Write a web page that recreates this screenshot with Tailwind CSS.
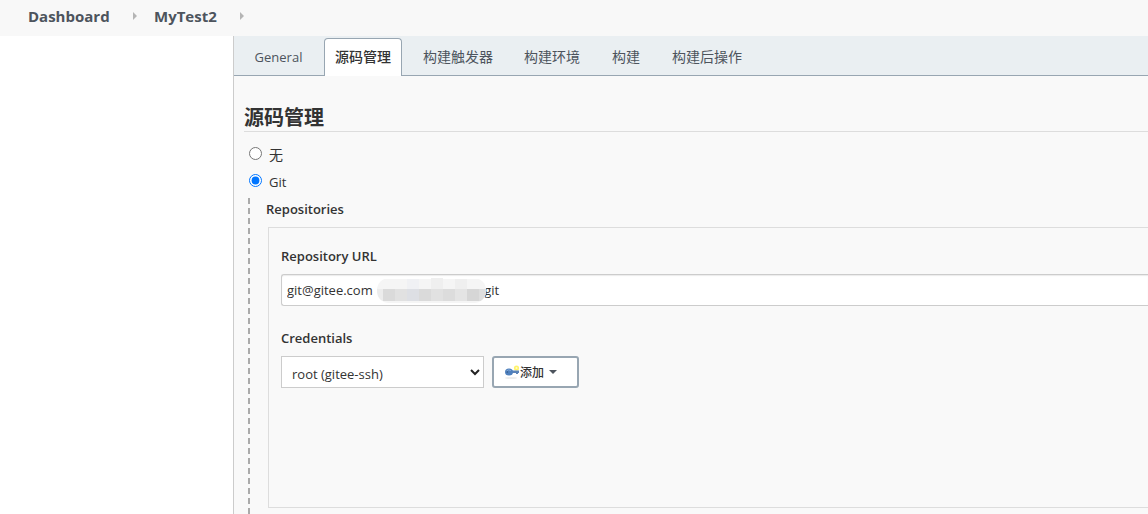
<!DOCTYPE html>
<html lang="zh-CN">
<head>
<meta charset="utf-8">
<meta name="viewport" content="width=device-width, initial-scale=1">
<title>MyTest2 Config</title>
<script src="https://cdn.jsdelivr.net/npm/@tailwindcss/browser@4"></script>
</head>
<body class="flex h-screen flex-col overflow-hidden bg-white font-['Open_Sans','Noto_Sans_CJK_SC',sans-serif] text-[13px] leading-5 text-[#333]">
<header class="h-9 shrink-0 bg-[#f8f8f8]">
  <nav class="flex h-8 items-center pl-7 text-[15px] font-bold text-[#4d545d]" aria-label="Breadcrumb">
    <a href="#" class="w-[82px] whitespace-nowrap">Dashboard</a>
    <svg class="ml-[23px] h-2 w-1" viewBox="0 0 4 8" fill="#b5b5b5"><path d="M0 0L4 4L0 8Z"/></svg>
    <a href="#" class="ml-[17px] w-[62px] whitespace-nowrap">MyTest2</a>
    <svg class="ml-6 h-2 w-1" viewBox="0 0 4 8" fill="#b5b5b5"><path d="M0 0L4 4L0 8Z"/></svg>
  </nav>
</header>
<div class="flex min-h-0 grow">
  <aside class="w-[233px] shrink-0"></aside>
  <main class="flex min-w-0 grow flex-col border-l border-[#ccc] bg-[#f9f9f9]">
    <nav class="flex h-10 shrink-0 items-end gap-3 border-b border-[#98a6b2] bg-[#eaeff2] pl-[11px] text-sm text-[#4d545d]">
      <a href="#" class="flex h-9 w-[67px] items-center justify-center text-[13px]">General</a>
      <a href="#" class="-mb-px flex h-[38px] w-[78px] items-center justify-center rounded-t border border-b-0 border-[#98a6b2] bg-white pb-0.5 font-medium text-[#333]" aria-current="page">源码管理</a>
      <a href="#" class="flex h-9 items-center px-[9px]">构建触发器</a>
      <a href="#" class="flex h-9 items-center px-[10px]">构建环境</a>
      <a href="#" class="flex h-9 items-center px-[10px]">构建</a>
      <a href="#" class="flex h-9 items-center px-[10px]">构建后操作</a>
    </nav>
    <form class="flex grow flex-col pl-[10px]">
      <h2 class="mt-7 h-7 border-b border-[#ddd] text-xl leading-7 font-bold">源码管理</h2>
      <div class="mt-[13px] flex flex-col gap-[7px] pl-[5px]">
        <label class="flex h-5 items-center gap-[7px] text-sm"><input type="radio" name="scm" class="mb-[3px] size-[13px]">无</label>
        <label class="flex h-5 items-center gap-[7px]"><input type="radio" name="scm" checked class="mb-[3px] size-[13px]">Git</label>
      </div>
      <div class="ml-1 mt-[6px] grow border-l-2 border-dashed border-[#aaa] pl-4">
        <h3 class="leading-[22px] font-semibold">Repositories</h3>
        <section class="ml-0.5 mt-[7px] h-[281px] border border-r-0 border-[#ddd] pl-3 pt-[18px]">
          <label for="url" class="block font-semibold">Repository URL</label>
          <div class="relative mt-2">
            <input id="url" type="text" class="h-8 w-full rounded-l-[3px] border border-r-0 border-[#ccc] bg-white px-[5px] shadow-[inset_0_1px_1px_rgba(0,0,0,0.08)]" value="git@gitee.com&nbsp;&nbsp;&nbsp;&nbsp;&nbsp;&nbsp;&nbsp;&nbsp;&nbsp;&nbsp;&nbsp;&nbsp;&nbsp;&nbsp;&nbsp;&nbsp;&nbsp;&nbsp;&nbsp;&nbsp;&nbsp;&nbsp;&nbsp;&nbsp;&nbsp;&nbsp;&nbsp;&nbsp;&nbsp;&nbsp;&nbsp;&nbsp;&nbsp;git">
            <svg class="absolute left-24 top-1 h-[25px] w-[110px]" viewBox="0 0 110 25">
              <clipPath id="pill"><rect x="0" y="0" width="109" height="25" rx="12"/></clipPath>
              <g clip-path="url(#pill)" shape-rendering="crispEdges">
                <path fill="#f5f5f5" d="M0 1H110V25H0Z"/>
                <path fill="#f0f1f4" d="M30 1h12v10H30z"/><path fill="#efefef" d="M54 0h12v11H54zM78 1h12v10H78z"/>
                <path fill="#ececec" d="M0 11h6v12H0z"/><path fill="#dadada" d="M6 11h12v12H6zM42 11h12v12H42z"/>
                <path fill="#e1e1e1" d="M18 11h12v12H18zM54 11h12v12H54z"/><path fill="#dddfe4" d="M30 11h12v12H30z"/>
                <path fill="#dcdcdc" d="M66 11h12v12H66z"/><path fill="#e4e4e4" d="M78 11h12v12H78z"/><path fill="#d6d6d6" d="M90 11h12v12H90z"/><path fill="#dedede" d="M102 11h8v12h-8z"/>
              </g>
            </svg>
          </div>
          <label for="cred" class="mt-[22px] block font-semibold">Credentials</label>
          <div class="mt-2 flex gap-2">
            <div class="relative">
              <select id="cred" class="h-8 w-[203px] appearance-none border border-[#ccc] bg-white pl-[10px] pt-[3px]"><option>root (gitee-ssh)</option></select>
              <svg class="pointer-events-none absolute right-1 top-3 h-2 w-[10px]" viewBox="0 0 10 8" fill="none" stroke="#222" stroke-width="2"><path d="M1 2L5 6L9 2"/></svg>
            </div>
            <button type="button" class="flex h-8 w-[87px] items-center rounded-[3px] border-2 border-[#98a6b2] bg-white pl-[11px] text-xs font-medium">
              <svg class="h-4 w-[15px]" viewBox="0 0 15 16">
                <ellipse cx="6" cy="14" rx="6" ry="1" fill="#ececec"/>
                <circle cx="11.5" cy="4" r="2.6" fill="#fff36b"/><circle cx="11.5" cy="4" r="1" fill="#fffbc8"/>
                <path d="M6 6.5H14V9H13V10H11V9H6Z" fill="#5b83b8"/><ellipse cx="4" cy="8" rx="4" ry="3.6" fill="#4f80bd"/><path d="M1.5 7Q3 5 6 6.5" stroke="#85a9d6" fill="none"/><circle cx="2.3" cy="8" r=".8" fill="#315787"/>
              </svg><span class="pt-0.5">添加</span><svg class="ml-[5px] h-1 w-2" viewBox="0 0 8 4" fill="#4d545d"><path d="M0 0H8L4 4Z"/></svg>
            </button>
          </div>
        </section>
      </div>
    </form>
  </main>
</div>
</body>
</html>
